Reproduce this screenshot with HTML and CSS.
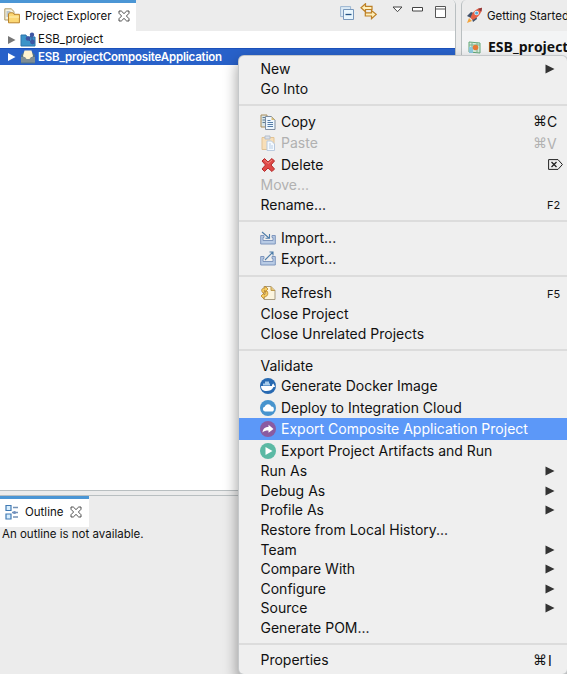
FILE: index.html
```html
<!DOCTYPE html>
<html lang="en">
<head>
<meta charset="utf-8">
<title>Project Explorer</title>
<link rel="stylesheet" href="styles.css">
</head>
<body>
<svg width="0" height="0" class="defs">
  <symbol id="close" viewBox="0 0 12 12"><path d="M1 1h2.300L6 3.600 8.700 1H11v2.300L8.400 6 11 8.700V11H8.700L6 8.400 3.300 11H1V8.700L3.600 6 1 3.300z" fill="#fff" stroke="#333" stroke-width=".85"/></symbol>
  <symbol id="arrow" viewBox="0 0 10 10"><path d="M.5.600 9.500 5 .5 9.400z" fill="#333"/></symbol>
</svg>
<div class="window">
  <div class="left">
    <section class="explorer">
      <header class="bar">
        <div class="tab tab-explorer">
          <svg class="i16" viewBox="0 0 16 16"><path d="M.8.800h6.400L10 3.500V12H.8z" fill="#f5f1df" stroke="#ad9965"/><path d="M2.500 4h4M2.500 6h3M2.500 8h2" stroke="#819bb9"/><path d="M4.500 14.800V6l1-1.200h3.300L10 6.300h5.400v8.500z" fill="#fbd774" stroke="#bb832b"/><path d="M5 9h10" stroke="#fff1b5"/></svg>
          <span class="title">Project Explorer</span>
          <svg class="x"><use href="#close"/></svg>
        </div>
        <div class="tools">
          <svg width="14" height="14" viewBox="0 0 14 14"><path d="M.6.600h10v10H.6z" fill="#dbeaf5" stroke="#9bb6d0"/><path d="M3.500 3.500h10v10h-10z" fill="#e9f6fd" stroke="#7797bb"/><path d="M5.500 8.500h6" stroke="#245384" stroke-width="1.300"/></svg>
          <svg class="link" width="17" height="17" viewBox="0 0 17 17"><path d="M5.500.800 1 4.800l4.500 4V6.500H12V3.300H5.500zM11.500 7.500v2.300H5.300V13h6.200v2.700l4.700-4.300z" fill="#fff0bb" stroke="#bd8027" stroke-width="1.200"/></svg>
          <svg class="down" width="11" height="7" viewBox="0 0 11 7"><path d="M1 1h9L5.500 5.700z" fill="#fff" stroke="#444"/></svg>
          <svg class="mini" width="11" height="5" viewBox="0 0 11 5"><path d="M.5.500h10v3.500H.5z" fill="#fff" stroke="#444"/></svg>
          <svg class="maxi" width="11" height="12" viewBox="0 0 11 12"><path d="M.5.500h10v11H.5zM.5 3h10" fill="#fff" stroke="#555"/></svg>
        </div>
      </header>
      <div class="tree">
        <div class="node">
          <svg class="tri" viewBox="0 0 8 10"><path d="M0 1v8l7.500-4z" fill="#777"/></svg>
          <svg class="i16" viewBox="0 0 16 16"><path d="M1 3h5l1 2h8v9H1z" fill="#3b94c9" stroke="#2f75aa"/><path d="M8 7l4-4v8z" fill="none" stroke="#3b559c"/><circle cx="12" cy="2.800" r="2.200" fill="#3d56a3"/><circle cx="8" cy="6.500" r="2.300" fill="#3d56a3"/><circle cx="12.500" cy="10" r="2.400" fill="#3d56a3"/></svg>
          <span>ESB_project</span>
        </div>
        <div class="node selected">
          <svg class="tri" viewBox="0 0 8 10"><path d="M0 1v8l7.500-4z" fill="#fff"/></svg>
          <svg class="i16" viewBox="0 0 16 16"><path d="M1 6l3-3h8l3 3v8.500H1z" fill="#4f7089"/><path d="M3 7l1.500-5.500h7L13 7l-2 3H5z" fill="#fff2cf"/><path d="M1 8h4l1.500 2h3L11 8h4v5.500H1z" fill="#7f8d93"/></svg>
          <span>ESB_projectCompositeApplication</span>
        </div>
      </div>
    </section>
    <section class="outline">
      <div class="tab tab-outline">
        <svg class="i16" viewBox="0 0 16 16"><path d="M2 1.500h5v5H2zM2 10h5v5H2z" fill="#d9efff" stroke="#417ab3" stroke-width="1.200"/><path d="M9 3.500h5M9 13h5M8 8.500h6" stroke="#7593b7" stroke-width="1.300"/><circle cx="10.500" cy="8.500" r="1.600" fill="#7190bd"/></svg>
        <span class="title">Outline</span>
        <svg class="x"><use href="#close"/></svg>
      </div>
      <p class="note">An outline is not available.</p>
    </section>
  </div>
  <section class="editor">
    <header class="etab">
      <svg width="17" height="17" viewBox="0 0 17 17"><path d="M1 9l4-4 3 1-3 5zM7 15l4-3-1-4-4 4z" fill="#42516a"/><path d="M4.500 11C6 5 10 1.500 16 .700 16 6 12 10.500 6.500 13z" fill="#e66045"/><path d="M12 1.800l4-1.100-.7 4z" fill="#8c383c"/><circle cx="10.600" cy="6" r="2.300" fill="#e3f5ff"/><circle cx="10.600" cy="6" r="1.500" fill="#55a9d5"/><path d="M1 16l2-5 3 3z" fill="#f4a43b"/></svg>
      <span>Getting Started</span>
    </header>
    <div class="form">
      <svg width="13" height="13" viewBox="0 0 13 13"><path d="M1 1l11 1v10L1 11z" fill="#d8edde" stroke="#62a878"/><path d="M1 4h11M4 1v10M9 1v11" stroke="#80b391"/><path d="M1 6h4v6H1z" fill="#8bc8df"/><circle cx="7.500" cy="6.500" r="2.800" fill="#e77b36"/></svg>
      <span>ESB_project</span>
    </div>
  </section>
  <nav class="menu">
    <div class="item"><span>New</span><svg class="sub"><use href="#arrow"/></svg></div>
    <div class="item"><span>Go Into</span></div>
    <hr>
    <div class="item icon"><svg class="i16" viewBox="0 0 16 16"><path d="M1 1h6v12H1z" fill="#d9e5e8" stroke="#a98d5b"/><path d="M2.500 3.500h3M2.500 6h3M2.500 8.500h3" stroke="#5d7c96"/><path d="M5.500 2.500h6L15 6v9.500H5.500z" fill="#eef7ff" stroke="#7d8ca0"/><path d="M11.500 2.500V6H15z" fill="#d9bd75"/><path d="M7.500 6.500h3M7.500 8.500h5.500M7.500 10.500h5.500M7.500 12.500h5.500" stroke="#557da8"/></svg><span>Copy</span><kbd>⌘<b>C</b></kbd></div>
    <div class="item icon disabled"><svg class="i16" viewBox="0 0 16 16"><path d="M2 2.500h12v12H2z" fill="#f8dfb8" stroke="#e1c395"/><path d="M5 1h5v3H5z" fill="#dce2eb" stroke="#b3bdcb"/><path d="M7 6h4.500L14.500 9v6.500H7z" fill="#f5faff" stroke="#b8c9de"/><path d="M9 9h2M9 11h4M9 13h4" stroke="#b8cde5"/></svg><span>Paste</span><kbd>⌘<b>V</b></kbd></div>
    <div class="item icon"><svg class="i16" viewBox="0 0 16 16"><path d="M2 4l2.500-2.500L8 5l4-3.500L14.500 4 11 8l3.500 4-2.500 2.500L8 11l-3.500 3.500L2 12l3.500-4z" fill="#df4947" stroke="#b52b2b" stroke-linejoin="round"/><path d="M4.500 3L8 6.500 12 3" fill="none" stroke="#f28980"/></svg><span>Delete</span><svg class="del" viewBox="0 0 15 11"><path d="M.6.600H10l4.400 4.900L10 10.400H.6z" fill="none" stroke="#222"/><path d="M3.500 3l5 5m0-5l-5 5" stroke="#222" stroke-width="1.300"/></svg></div>
    <div class="item disabled"><span>Move...</span></div>
    <div class="item"><span>Rename...</span><kbd class="fn">F2</kbd></div>
    <hr>
    <div class="item icon"><svg class="i16" viewBox="0 0 16 16"><path d="M.7 5.500H4v2H3v3h10v-3h-1v-2h3.300V14H.7z" fill="#b8cbe5" stroke="#7f96bd"/><path d="M2 2l7 6M9.500 4v4.200H5.500" fill="none" stroke="#4f7da9" stroke-width="1.100"/></svg><span>Import...</span></div>
    <div class="item icon"><svg class="i16" viewBox="0 0 16 16"><path d="M.7 5.500H4v2H3v3h10v-3h-1v-2h3.300V14H.7z" fill="#b8cbe5" stroke="#7f96bd"/><path d="M5 9l8-8M9.500 1H13v3.500" fill="none" stroke="#4f7da9" stroke-width="1.100"/></svg><span>Export...</span></div>
    <hr>
    <div class="item icon"><svg class="i16" viewBox="0 0 16 16"><path d="M4 1.500h7l4 4v9H4z" fill="#fcf5df" stroke="#a89c82"/><path d="M11 1.500v4h4" fill="#e6c77d" stroke="#bd9a4d"/><path d="M8 4L5 1v2C1 3 1 6 3 8l2-1c-1-1-1-2 0-2v2zM1 11l3-3v2c2-1 2-2 1-3l2-1c2 3 0 6-3 6v2z" fill="#f6ce64" stroke="#b9852a" stroke-width=".8"/></svg><span>Refresh</span><kbd class="fn">F5</kbd></div>
    <div class="item"><span>Close Project</span></div>
    <div class="item"><span>Close Unrelated Projects</span></div>
    <hr>
    <div class="item"><span>Validate</span></div>
    <div class="item icon"><svg class="i16" viewBox="0 0 16 16"><circle cx="8" cy="8" r="8" fill="#2769b1"/><path d="M1 8h11c0-1.500.5-2 1.200-2.500.8.800.8 1.500.8 2l1.500.2c-.4 1-1 1.300-2 1.300C12 12 9.500 13 6.500 13 3 13 1 11 1 8z" fill="#fff"/><path d="M3 5.500h7v2H3zM5 3.500h4v2H5z" fill="#a9cdec"/></svg><span>Generate Docker Image</span></div>
    <div class="item icon"><svg class="i16" viewBox="0 0 16 16"><circle cx="8" cy="8" r="8" fill="#4794ce"/><path d="M5 11.500a2.400 2.400 0 0 1-.3-4.700 3.500 3.500 0 0 1 6.600-.3 2.500 2.500 0 0 1 .2 5z" fill="#fff"/></svg><span>Deploy to Integration Cloud</span></div>
    <div class="item icon active"><svg class="i16" viewBox="0 0 16 16"><circle cx="8" cy="8" r="8" fill="#8a5ba1"/><path d="M2.500 11.500C3 7.500 5 6 8.500 6V3.700L13.500 8l-5 3.800V9.500c-3 0-4.500.5-6 2z" fill="#fff"/></svg><span>Export Composite Application Project</span></div>
    <div class="item icon"><svg class="i16" viewBox="0 0 16 16"><circle cx="8" cy="8" r="8" fill="#5bb9a4"/><path d="M5.500 4l7 4-7 4z" fill="#fff"/></svg><span>Export Project Artifacts and Run</span></div>
    <div class="item"><span>Run As</span><svg class="sub"><use href="#arrow"/></svg></div>
    <div class="item"><span>Debug As</span><svg class="sub"><use href="#arrow"/></svg></div>
    <div class="item"><span>Profile As</span><svg class="sub"><use href="#arrow"/></svg></div>
    <div class="item"><span>Restore from Local History...</span></div>
    <div class="item"><span>Team</span><svg class="sub"><use href="#arrow"/></svg></div>
    <div class="item"><span>Compare With</span><svg class="sub"><use href="#arrow"/></svg></div>
    <div class="item"><span>Configure</span><svg class="sub"><use href="#arrow"/></svg></div>
    <div class="item"><span>Source</span><svg class="sub"><use href="#arrow"/></svg></div>
    <div class="item"><span>Generate POM...</span></div>
    <hr>
    <div class="item"><span>Properties</span><kbd>⌘<b class="narrow">I</b></kbd></div>
  </nav>
</div>
</body>
</html>
```
FILE: styles.css
```css
* { box-sizing: border-box; }
body { margin: 0; font-family: Inter, "Liberation Sans", sans-serif; color: #111; }
svg { display: block; flex: none; }
.defs { position: absolute; }
.window { position: relative; display: flex; width: 567px; height: 674px; overflow: hidden; background: #ececec; }
.left { width: 456px; display: flex; flex-direction: column; }
.explorer { height: 491px; background: #fff; border-right: 1px solid #b9bfc1; border-bottom: 1px solid #b9bfc1; border-top-right-radius: 5px; }
.bar { display: flex; justify-content: space-between; height: 31px; background: #ececec; border-top-right-radius: 5px; }
.tab { display: flex; align-items: center; background: #fff; border-top: 3px solid #4b96d5; padding: 0 0 2px 4px; font-size: 11.5px; }
.tab-explorer { width: 136px; }
.title { margin-left: 5px; white-space: nowrap; }
.tab-explorer .title { width: 87px; }
.x { width: 12px; height: 12px; margin-left: 6px; }
.tab-explorer .x { margin-left: 5.500px; }
.i16 { width: 16px; height: 16px; }
.tools { display: flex; padding: 6px 9px 0 0; }
.link { margin: -3px 0 0 6px; }
.down { margin-left: 15px; }
.mini { margin: 1px 0 0 9px; }
.maxi { margin-left: 12px; }
.node { display: flex; align-items: center; height: 17px; padding-left: 8px; font-size: 11.5px; white-space: nowrap; }
.node .tri { width: 8px; height: 10px; }
.node .i16 { margin-left: 4px; }
.node span { margin-left: 2px; padding-bottom: 2px; }
.node.selected { background: #2861c9; border-top: 1px solid #1c51bb; color: #fff; font-weight: 600; letter-spacing: -.19px; }
.node.selected span { padding-bottom: 1px; }
.outline { margin-top: 4px; border-top: 1px solid #b9bfc1; flex: 1; }
.tab-outline { width: 89px; height: 31px; }
.tab-outline .title { width: 39px; }
.tab-outline .x { margin-left: 6px; }
.note { margin: 0; padding: 0 2px; font-size: 11.5px; line-height: 14px; }
.editor { width: 106px; margin-left: 5px; border-left: 1px solid #b9bfc1; border-top-left-radius: 5px; }
.etab { display: flex; align-items: center; height: 31px; padding-left: 4px; font-size: 11.5px; white-space: nowrap; }
.etab span { flex: 1; min-width: 0; margin-left: 4px; overflow: hidden; }
.form { display: flex; align-items: center; gap: 7px; height: 32px; padding-left: 6px; background: #f3f4f5; font: 700 14px "Open Sans", sans-serif; }
.form span { padding-bottom: 2px; }
.menu { position: absolute; left: 239px; top: 56px; width: 328px; height: 618px; padding-top: 3.300px; background: #efefef; border-radius: 5px; box-shadow: 0 0 0 1px #c5c8ca, 0 7px 14px 2px rgba(0,0,0,.36); font-size: 14px; }
.item { display: flex; align-items: center; height: 19.600px; padding-left: 21.500px; white-space: nowrap; }
.item span { padding-bottom: 1px; }
.item.icon { height: 21.500px; padding-left: 21px; }
.item .i16 { margin-right: 5px; }
.menu hr { height: 12.500px; margin: 0; border: 0; background: linear-gradient(#dcdcdc, #dcdcdc) center / 100% 2px no-repeat; }
.sub { width: 10px; height: 10px; margin-left: auto; margin-right: 12px; }
.del { width: 15px; height: 11px; margin-left: auto; margin-right: 4px; }
.disabled { color: #b1b1b1; }
.active { background: #5c98f8; color: #fff; }
kbd { display: flex; width: 34px; margin-left: auto; font: 14px "DejaVu Sans", sans-serif; }
kbd b { font: 14px Inter, sans-serif; }
kbd .narrow { margin-left: 1px; }
kbd.fn { width: 20px; padding-top: 1px; font: 11px Inter, sans-serif; }
```
